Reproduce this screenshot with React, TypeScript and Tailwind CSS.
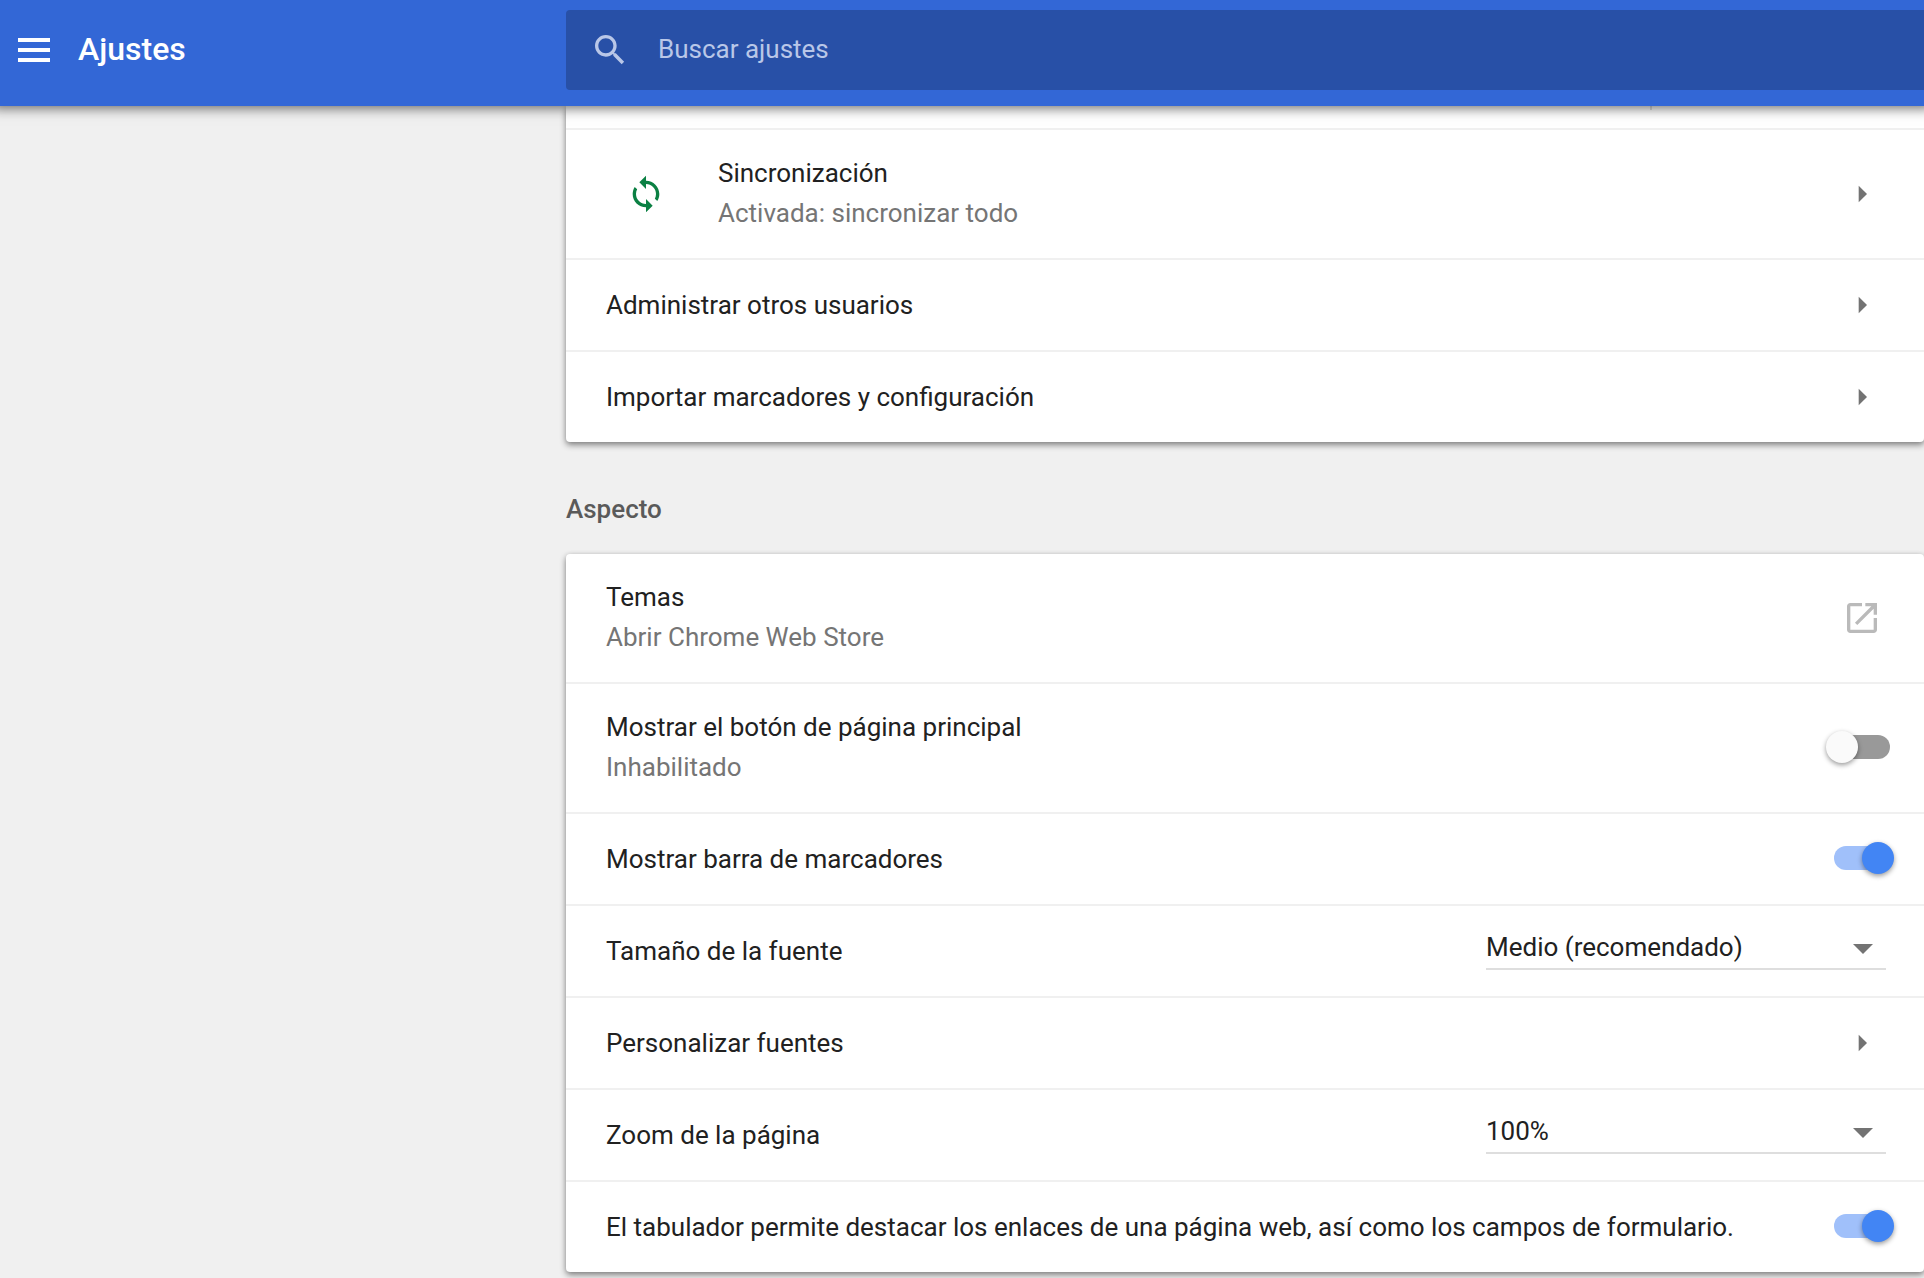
import { useState, type ReactNode } from 'react';
import { clsx } from 'clsx';

const cardShadow =
  'shadow-[0_3px_6px_rgba(0,0,0,0.45),0_0_4px_rgba(0,0,0,0.08)]';

function Icon({ d, className }: { d: string; className?: string }) {
  return (
    <svg viewBox="0 0 24 24" fill="currentColor" className={clsx('size-10 shrink-0', className)} aria-hidden="true">
      <path d={d} />
    </svg>
  );
}

const icons = {
  search:
    'M15.5 14h-.79l-.28-.27C15.41 12.59 16 11.11 16 9.5 16 5.91 13.09 3 9.5 3S3 5.91 3 9.5 5.91 16 9.5 16c1.61 0 3.09-.59 4.23-1.57l.27.28v.79l5 4.99L20.49 19l-4.99-5zm-6 0C7.01 14 5 11.99 5 9.5S7.01 5 9.5 5 14 7.01 14 9.5 11.99 14 9.5 14z',
  sync:
    'M12 4V1L8 5l4 4V6c3.31 0 6 2.69 6 6 0 1.01-.25 1.97-.7 2.8l1.46 1.46C19.54 15.03 20 13.57 20 12c0-4.42-3.58-8-8-8zm0 14c-3.31 0-6-2.69-6-6 0-1.01.25-1.97.7-2.8L5.24 7.74C4.46 8.97 4 10.43 4 12c0 4.42 3.58 8 8 8v3l4-4-4-4v3z',
  arrow: 'M10 7l5 5-5 5z',
  openInNew:
    'M19 19H5V5h7V3H5c-1.11 0-2 .9-2 2v14c0 1.1.89 2 2 2h14c1.1 0 2-.9 2-2v-7h-2v7zM14 3v2h3.59l-9.83 9.83 1.41 1.41L19 6.41V10h2V3h-7z'
};

const rowClass =
  'flex w-full items-center border-t-2 border-[#f0f0f0] pl-10 pr-[38px] text-left';

function RowText({ title, sub }: { title: string; sub?: string }) {
  return (
    <span className={clsx('min-w-0 flex-1', sub && 'pb-0.5')}>
      <span className="block">{title}</span>
      {sub && <span className="block text-[#757575]">{sub}</span>}
    </span>
  );
}

type LinkRowProps = { title: string; sub?: string; leading?: ReactNode; external?: boolean };

function LinkRow({ title, sub, leading, external }: LinkRowProps) {
  const content = (
    <>
      {leading}
      <RowText title={title} sub={sub} />
      <span className="flex w-12 justify-center">
        <Icon
          d={external ? icons.openInNew : icons.arrow}
          className={external ? 'text-[#bababa]' : 'text-[#737373]'}
        />
      </span>
    </>
  );
  const className = clsx(rowClass, 'first:border-t-0', sub ? 'py-[23px]' : 'py-[25px]');

  return external ? (
    <a href="#temas" className={className}>{content}</a>
  ) : (
    <button type="button" className={className}>{content}</button>
  );
}

function ToggleRow({ title, sub, defaultChecked = false }: { title: string; sub?: string; defaultChecked?: boolean }) {
  const [checked, setChecked] = useState(defaultChecked);

  return (
    <label className={clsx(rowClass, sub ? 'py-[23px]' : 'py-[25px]')}>
      <RowText title={title} sub={sub} />
      <input
        type="checkbox"
        role="switch"
        checked={checked}
        onChange={(e) => setChecked(e.target.checked)}
        className={clsx(
          'relative -mr-1 mb-0.5 h-6 w-14 shrink-0 appearance-none rounded-full bg-[#999999] checked:bg-[#a0c0fa]',
          'before:absolute before:-left-2 before:-top-1 before:size-8 before:rounded-full before:bg-[#fafafa] before:shadow-[0_2px_5px_rgba(0,0,0,0.4)]',
          'checked:before:left-7 checked:before:bg-[#4285f4]'
        )}
      />
    </label>
  );
}

function SelectRow({ id, title, options, defaultValue }: { id: string; title: string; options: string[]; defaultValue: string }) {
  return (
    <div className={clsx(rowClass, 'py-[25px]')}>
      <label htmlFor={id} className="flex-1">{title}</label>
      <div className="relative w-[400px]">
        <select
          id={id}
          defaultValue={defaultValue}
          className="block h-[38px] w-full appearance-none border-b-2 border-[#dedede] bg-transparent pb-1.5 pr-12 leading-[30px] outline-none"
        >
          {options.map((o) => (
            <option key={o}>{o}</option>
          ))}
        </select>
        <svg viewBox="0 0 20 10" className="pointer-events-none absolute right-[13px] top-3 h-2.5 w-5 fill-[#737373]" aria-hidden="true">
          <path d="M0 0h20L10 10z" />
        </svg>
      </div>
    </div>
  );
}

export default function App() {
  return (
    <div className="min-h-screen overflow-x-hidden bg-[#f0f0f0] pb-1.5 font-['Roboto',sans-serif] text-[26px] leading-10 text-[#212121]">
      <header className="relative z-10 flex bg-[#3367d6] pb-4 pt-2.5 shadow-[0_-6px_12px_8px_rgba(0,0,0,0.6)]">
        <div className="flex w-[566px] shrink-0 items-center gap-7 pl-[18px] text-white">
          <button type="button" aria-label="Menú principal">
            <svg viewBox="0 0 32 24" className="h-6 w-8 fill-current" aria-hidden="true">
              <path d="M0 0h32v4H0zM0 10h32v4H0zM0 20h32v4H0z" />
            </svg>
          </button>
          <h1 className="pb-0.5 text-[32px] font-medium">Ajustes</h1>
        </div>
        <div className="flex h-20 flex-1 items-center gap-7 rounded-l bg-[#2850a7] pl-6 text-[#b9c7e8]">
          <Icon d={icons.search} />
          <input
            type="search"
            aria-label="Buscar ajustes"
            placeholder="Buscar ajustes"
            className="min-w-0 flex-1 bg-transparent pb-0.5 outline-none placeholder:text-[#b9c7e8]"
          />
        </div>
      </header>

      <main className="pl-[566px]">
        <section className={clsx('rounded-b bg-white', cardShadow)}>
          {/* tail of the profile row, the rest is scrolled under the header */}
          <div className="flex h-[22px] justify-end pr-[272px]">
            <div className="h-1 w-0.5 bg-[#e0e0e0]" />
          </div>
          <LinkRow
            title="Sincronización"
            sub="Activada: sincronizar todo"
            leading={
              <span className="mr-8 flex w-20 justify-center text-[#0b8043]">
                <Icon d={icons.sync} />
              </span>
            }
          />
          <LinkRow title="Administrar otros usuarios" />
          <LinkRow title="Importar marcadores y configuración" />
        </section>

        <h2 className="flex h-28 items-end pb-[25px] font-medium text-[#5a5a5a]">Aspecto</h2>

        <section className={clsx('rounded bg-white', cardShadow)}>
          <LinkRow title="Temas" sub="Abrir Chrome Web Store" external />
          <ToggleRow title="Mostrar el botón de página principal" sub="Inhabilitado" />
          <ToggleRow title="Mostrar barra de marcadores" defaultChecked />
          <SelectRow
            id="font-size"
            title="Tamaño de la fuente"
            options={['Muy pequeño', 'Pequeño', 'Medio (recomendado)', 'Grande', 'Muy grande']}
            defaultValue="Medio (recomendado)"
          />
          <LinkRow title="Personalizar fuentes" />
          <SelectRow
            id="page-zoom"
            title="Zoom de la página"
            options={['75%', '90%', '100%', '110%', '125%']}
            defaultValue="100%"
          />
          <ToggleRow
            title="El tabulador permite destacar los enlaces de una página web, así como los campos de formulario."
            defaultChecked
          />
        </section>
      </main>
    </div>
  );
}
